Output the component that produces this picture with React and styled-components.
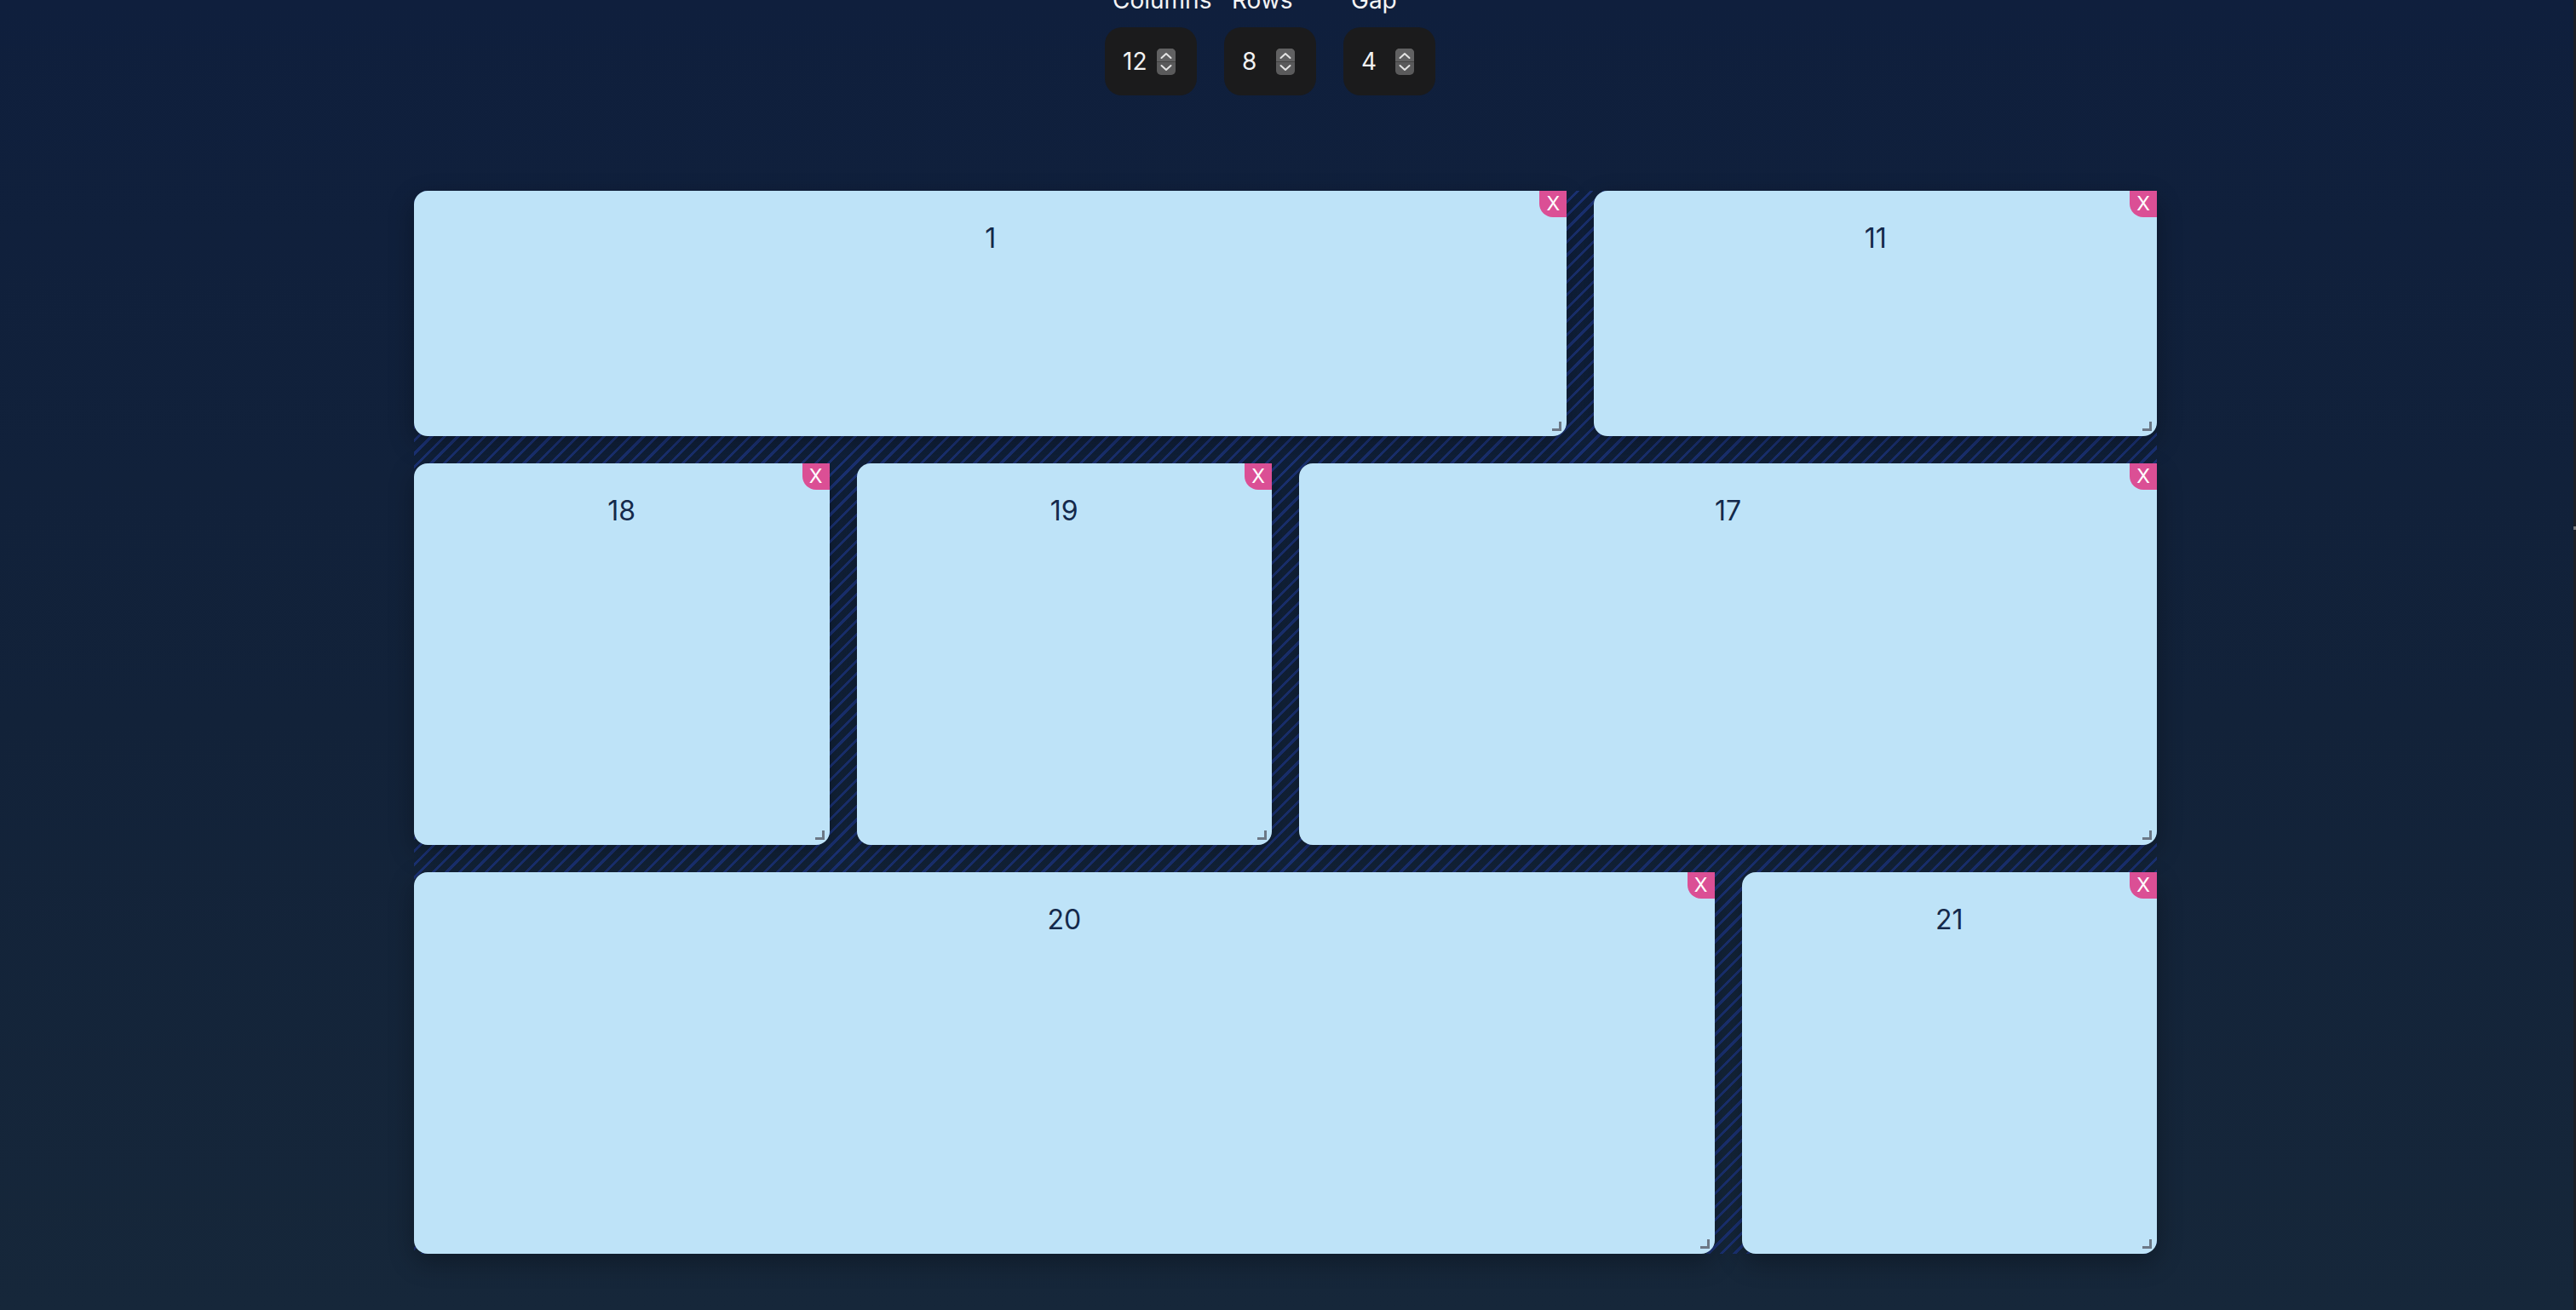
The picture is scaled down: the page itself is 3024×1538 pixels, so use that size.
import React, { useState } from 'react';
import styled, { createGlobalStyle } from 'styled-components';

const GlobalStyle = createGlobalStyle`
  html {
    height: 100%;
    background: linear-gradient(180deg, #0f1f3d 0%, #122239 55%, #16273a 100%);
  }
  body {
    margin: 0;
    min-height: 100%;
    font-family: Inter, "Noto Sans", "Liberation Sans", sans-serif;
  }
`;

const Shell = styled.div`
  display: flex;
  height: 100vh;
  overflow: hidden;
`;

const Page = styled.div`
  flex: 1;
  display: flex;
  flex-direction: column;
  align-items: center;
`;

// thin scrollbar strip at the right edge
const Edge = styled.div`
  width: 6px;
  background: linear-gradient(to right, transparent 3px, #1b1f27 3px);
  position: relative;

  &::after {
    content: '';
    position: absolute;
    right: 0;
    top: 618px;
    width: 3px;
    height: 4px;
    background: #7a7a7a;
  }
`;

const Controls = styled.div`
  display: flex;
  gap: 32px;
  margin-top: -21px;
  padding-right: 36px;
`;

const Control = styled.label`
  display: flex;
  flex-direction: column;
  width: 108px;
`;

const Label = styled.span`
  display: block;
  font-size: 28px;
  line-height: 42px;
  color: #f4f4f5;
  padding-left: 9px;
  margin-bottom: 11px;
  white-space: nowrap;
`;

const Field = styled.div`
  display: flex;
  align-items: center;
  box-sizing: border-box;
  height: 80px;
  padding: 0 25px 0 21px;
  border-radius: 20px;
  background: #1b1b1c;
`;

const NumberInput = styled.input`
  flex: 1;
  min-width: 0;
  border: none;
  outline: none;
  background: transparent;
  color: #f2f2f2;
  font-family: inherit;
  font-size: 28px;
  padding: 0;
  -moz-appearance: textfield;

  &::-webkit-inner-spin-button,
  &::-webkit-outer-spin-button {
    -webkit-appearance: none;
    margin: 0;
  }
`;

const Spinner = () => (
  <svg width="22" height="31" viewBox="0 0 22 31">
    <rect x="0" y="0" width="22" height="31" rx="5" fill="#5a5a5b" />
    <path d="M0 5a5 5 0 0 1 5 -5h12a5 5 0 0 1 5 5v10H0z" fill="#616162" />
    <line x1="0" y1="15.5" x2="22" y2="15.5" stroke="#444" strokeWidth="1" />
    <path d="M5.5 11 L11 6 L16.5 11" fill="none" stroke="#e4e4e4" strokeWidth="2" strokeLinecap="round" strokeLinejoin="round" />
    <path d="M5.5 20 L11 25 L16.5 20" fill="none" stroke="#e4e4e4" strokeWidth="2" strokeLinecap="round" strokeLinejoin="round" />
  </svg>
);

const Board = styled.div`
  display: grid;
  grid-template-columns: repeat(12, 1fr);
  grid-auto-rows: 128px;
  gap: 32px;
  width: 2046px;
  margin-top: 112px;
  background: repeating-linear-gradient(
    135deg,
    transparent 0 8px,
    #1b3274 8px 11px
  );
`;

const Card = styled.div`
  position: relative;
  grid-column: span ${p => p.$cols};
  grid-row: span ${p => p.$rows};
  background: #bee3f8;
  border-radius: 16px;
  box-shadow: 0 10px 30px rgba(0, 0, 0, 0.3);
  padding-top: 32px;
  text-align: center;
  font-size: 32px;
  line-height: 1.5;
  color: #14294b;
`;

const CloseButton = styled.button`
  position: absolute;
  top: 0;
  right: 0;
  width: 32px;
  height: 31px;
  padding: 0;
  border: none;
  border-bottom-left-radius: 16px;
  background: #db4f95;
  color: #fff;
  font-family: inherit;
  font-size: 23px;
  line-height: 31px;
  cursor: pointer;
`;

const ResizeHandle = styled.span`
  position: absolute;
  right: 6px;
  bottom: 6px;
  width: 8px;
  height: 8px;
  border-right: 3px solid #6c7886;
  border-bottom: 3px solid #6c7886;
  cursor: se-resize;
`;

const initialItems = [
  { id: 1, cols: 8, rows: 2 },
  { id: 11, cols: 4, rows: 2 },
  { id: 18, cols: 3, rows: 3 },
  { id: 19, cols: 3, rows: 3 },
  { id: 17, cols: 6, rows: 3 },
  { id: 20, cols: 9, rows: 3 },
  { id: 21, cols: 3, rows: 3 },
];

export default function App() {
  const [settings, setSettings] = useState({ columns: 12, rows: 8, gap: 4 });
  const [items, setItems] = useState(initialItems);

  const fields = [
    { key: 'columns', label: 'Columns' },
    { key: 'rows', label: 'Rows' },
    { key: 'gap', label: 'Gap' },
  ];

  return (
    <>
      <GlobalStyle />
      <Shell>
        <Page>
          <Controls>
            {fields.map(f => (
              <Control key={f.key}>
                <Label>{f.label}</Label>
                <Field>
                  <NumberInput
                    type="number"
                    value={settings[f.key]}
                    onChange={e => setSettings({ ...settings, [f.key]: Number(e.target.value) })}
                  />
                  <Spinner />
                </Field>
              </Control>
            ))}
          </Controls>
          <Board>
            {items.map(item => (
              <Card key={item.id} $cols={item.cols} $rows={item.rows}>
                {item.id}
                <CloseButton onClick={() => setItems(items.filter(i => i.id !== item.id))}>X</CloseButton>
                <ResizeHandle />
              </Card>
            ))}
          </Board>
        </Page>
        <Edge />
      </Shell>
    </>
  );
}
